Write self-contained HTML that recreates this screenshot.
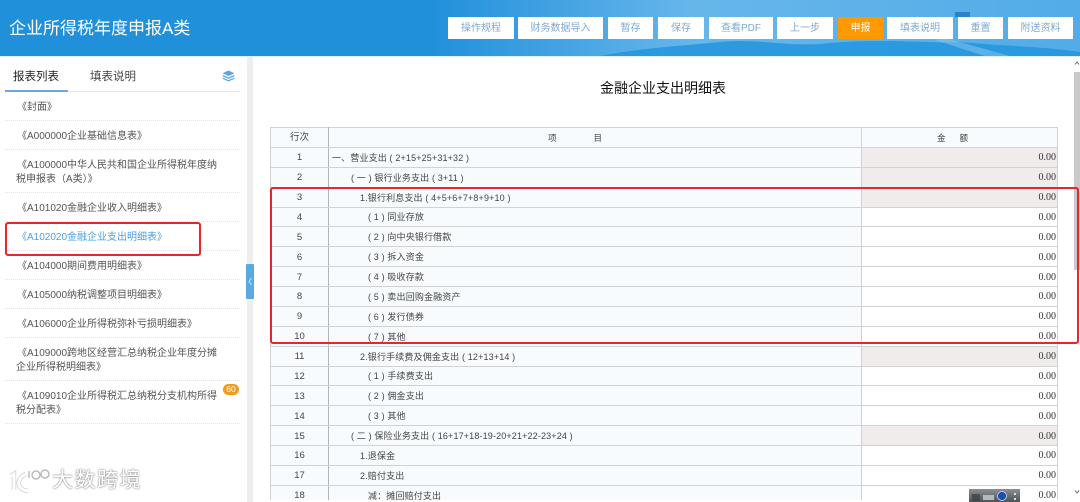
<!DOCTYPE html>
<html lang="zh"><head><meta charset="utf-8"><title>企业所得税年度申报A类</title>
<style>
*{box-sizing:border-box}
html,body{margin:0;padding:0;width:1080px;height:502px;overflow:hidden;background:#fff}
body{font-family:"Liberation Sans","Noto Sans CJK SC",sans-serif;color:#555}
#w{position:absolute;left:0;top:0;width:1080px;height:502px;overflow:hidden;filter:blur(.3px)}
.abs{position:absolute}
#hd{left:0;top:0;width:1080px;height:56px;background:linear-gradient(90deg,#2190db 0,#2190db 40%,#4aa6e4 54%,#66b6ea 64%,#5eb2e9 80%,#52ace8 100%);overflow:hidden}
#hd svg{position:absolute;left:0;top:0}
#ttl{left:9px;top:17px;font-size:17px;line-height:24px;color:#fff;white-space:nowrap}
.b{position:absolute;top:17px;height:22px;line-height:24px;background:#fff;color:#7fa9d2;font-size:10px;text-align:center;white-space:nowrap}
.b.o{background:#ff9900;color:#fff}
#ln{left:0;top:56px;width:1080px;height:1px;background:#d5effb}
#strip{left:247px;top:57px;width:6px;height:445px;background:#eeeeee}
#tog{left:246px;top:264px;width:8px;height:35px;background:#5aa9e0;border-radius:1px}
.tab{top:70px;font-size:11.500px;line-height:15px;white-space:nowrap}
#tl{left:5px;top:91px;width:235px;height:1px;background:#e6e6e6}
#tu{left:5px;top:90px;width:63px;height:2px;background:#6ea6e0}
.it{position:absolute;left:16px;width:210px;font-size:10px;line-height:14.500px;color:#555;white-space:nowrap}
.sep{position:absolute;left:5px;width:235px;height:0;border-top:1px dotted #e3e3e3}
#bad{left:223px;top:384px;width:16px;height:11px;border-radius:6px;background:#f39a1c;color:#fff;font-size:8.500px;line-height:11px;text-align:center}
#h1{left:540px;top:79px;width:246px;text-align:center;font-size:14px;line-height:18px;color:#111}
table{position:absolute;left:270px;top:127px;width:787px;border-collapse:collapse;table-layout:fixed}
td{height:19.880px;padding:1px 0 0;border:1px solid #d2d2d2;font-size:9px;line-height:12px;color:#444;white-space:nowrap;overflow:hidden}
td.n{text-align:center;background:#f7fbfd;font-size:9.500px;border-right:1px solid #aeb4b8;padding-top:2px}
td.t{background:#f7fbfd;padding-left:3px;letter-spacing:.15px}
td.v{text-align:right;padding-right:1px;padding-top:2px;font-family:"Liberation Serif",serif;font-size:10px;background:#fff;color:#333}
td.p{background:#f0ecec}
td.h{text-align:left;background:#f7fbfd;font-size:8.500px;padding-top:2px}
#cut{left:262px;top:500px;width:800px;height:2px;background:#fff}
#sb{left:1074px;top:72px;width:6px;height:198px;background:#c9c9c9}
.red{position:absolute;border:2px solid #e5262a;border-radius:3px}
#wm{left:52px;top:467px;font-size:21px;line-height:28px;color:#fff;letter-spacing:1.500px;text-shadow:0 0 2px #888,0 0 1px #777;white-space:nowrap}
#tool{left:969px;top:489px;width:51px;height:13px;background:linear-gradient(#8a8f96,#4e5358)}
</style></head><body><div id="w">
<div id="hd" class="abs">
<svg width="1080" height="56" viewBox="0 0 1080 56"><path d="M600 56C640 48 680 46 720 42C760 38 790 48 830 43C880 38 930 44 960 42C1000 46 1040 46 1080 52V56Z" fill="#1f93dc" opacity=".8"/><path d="M945 38L1010 56 985 56 935 40Z" fill="#8cc9ec" opacity=".5"/><rect x="955" y="12" width="15" height="5" fill="#2b82c6"/></svg>
<div id="ttl" class="abs">企业所得税年度申报A类</div>
<div class="b" style="left:448px;width:66px">操作规程</div>
<div class="b" style="left:518px;width:85px">财务数据导入</div>
<div class="b" style="left:608px;width:45px">暂存</div>
<div class="b" style="left:658px;width:46px">保存</div>
<div class="b" style="left:709px;width:64px">查看PDF</div>
<div class="b" style="left:777px;width:56px">上一步</div>
<div class="b o" style="left:838px;width:45px">申报</div>
<div class="b" style="left:887px;width:66px">填表说明</div>
<div class="b" style="left:958px;width:45px">重置</div>
<div class="b" style="left:1008px;width:65px">附送资料</div>
</div>
<div id="ln" class="abs"></div>
<div id="strip" class="abs"></div>
<div id="tog" class="abs"><svg width="8" height="35"><path d="M5.500 14L3 17.500 5.500 21" fill="none" stroke="#cfe6f7" stroke-width="1"/></svg></div>
<div class="abs tab" style="left:13px;color:#222">报表列表</div>
<div class="abs tab" style="left:90px;color:#444">填表说明</div>
<svg class="abs" style="left:222px;top:70px" width="13" height="12" viewBox="0 0 13 12"><path d="M6.500 0.500L12.500 3.200 6.500 6 .5 3.200Z" fill="#5aa7e6"/><path d="M.8 5.600L6.500 8.200 12.200 5.600M.8 8.200L6.500 10.800 12.200 8.200" fill="none" stroke="#5aa7e6" stroke-width="1.300"/></svg>
<div id="tl" class="abs"></div><div id="tu" class="abs"></div>
<div class="it" style="top:101px;left:17px">《封面》</div><div class="sep" style="top:120px"></div>
<div class="it" style="top:130px;left:17px">《A000000企业基础信息表》</div><div class="sep" style="top:149px"></div>
<div class="it" style="top:159px;left:17px">《A100000中华人民共和国企业所得税年度纳</div>
<div class="it" style="top:173px">税申报表（A类）》</div><div class="sep" style="top:192px"></div>
<div class="it" style="top:202px;left:17px">《A101020金融企业收入明细表》</div><div class="sep" style="top:221px"></div>
<div class="it" style="top:231px;left:17px;color:#4a9fe0">《A102020金融企业支出明细表》</div><div class="sep" style="top:250px"></div>
<div class="it" style="top:260px;left:17px">《A104000期间费用明细表》</div><div class="sep" style="top:279px"></div>
<div class="it" style="top:289px;left:17px">《A105000纳税调整项目明细表》</div><div class="sep" style="top:308px"></div>
<div class="it" style="top:318px;left:17px">《A106000企业所得税弥补亏损明细表》</div><div class="sep" style="top:337px"></div>
<div class="it" style="top:347px;left:17px">《A109000跨地区经营汇总纳税企业年度分摊</div>
<div class="it" style="top:361px">企业所得税明细表》</div><div class="sep" style="top:380px"></div>
<div class="it" style="top:390px;left:17px">《A109010企业所得税汇总纳税分支机构所得</div>
<div class="it" style="top:404px">税分配表》</div><div class="sep" style="top:423px"></div>
<div id="bad" class="abs">60</div>
<div id="h1" class="abs">金融企业支出明细表</div>
<table><colgroup><col style="width:58px"><col style="width:533px"><col style="width:196px"></colgroup>
<tr><td class="n">行次</td><td class="h" style="padding-left:219px">项<span style="margin-left:37px">目</span></td><td class="h" style="padding-left:75px">金<span style="margin-left:14px">额</span></td></tr>
<tr><td class="n">1</td><td class="t">一、营业支出 ( 2+15+25+31+32 )</td><td class="v p">0.00</td></tr>
<tr><td class="n">2</td><td class="t" style="padding-left:22px">( 一 ) 银行业务支出 ( 3+11 )</td><td class="v p">0.00</td></tr>
<tr><td class="n">3</td><td class="t" style="padding-left:31px">1.银行利息支出 ( 4+5+6+7+8+9+10 )</td><td class="v p">0.00</td></tr>
<tr><td class="n">4</td><td class="t" style="padding-left:39px">( 1 ) 同业存放</td><td class="v">0.00</td></tr>
<tr><td class="n">5</td><td class="t" style="padding-left:39px">( 2 ) 向中央银行借款</td><td class="v">0.00</td></tr>
<tr><td class="n">6</td><td class="t" style="padding-left:39px">( 3 ) 拆入资金</td><td class="v">0.00</td></tr>
<tr><td class="n">7</td><td class="t" style="padding-left:39px">( 4 ) 吸收存款</td><td class="v">0.00</td></tr>
<tr><td class="n">8</td><td class="t" style="padding-left:39px">( 5 ) 卖出回购金融资产</td><td class="v">0.00</td></tr>
<tr><td class="n">9</td><td class="t" style="padding-left:39px">( 6 ) 发行债券</td><td class="v">0.00</td></tr>
<tr><td class="n">10</td><td class="t" style="padding-left:39px">( 7 ) 其他</td><td class="v">0.00</td></tr>
<tr><td class="n">11</td><td class="t" style="padding-left:31px">2.银行手续费及佣金支出 ( 12+13+14 )</td><td class="v p">0.00</td></tr>
<tr><td class="n">12</td><td class="t" style="padding-left:39px">( 1 ) 手续费支出</td><td class="v">0.00</td></tr>
<tr><td class="n">13</td><td class="t" style="padding-left:39px">( 2 ) 佣金支出</td><td class="v">0.00</td></tr>
<tr><td class="n">14</td><td class="t" style="padding-left:39px">( 3 ) 其他</td><td class="v">0.00</td></tr>
<tr><td class="n">15</td><td class="t" style="padding-left:22px">( 二 ) 保险业务支出 ( 16+17+18-19-20+21+22-23+24 )</td><td class="v p">0.00</td></tr>
<tr><td class="n">16</td><td class="t" style="padding-left:31px">1.退保金</td><td class="v">0.00</td></tr>
<tr><td class="n">17</td><td class="t" style="padding-left:31px">2.赔付支出</td><td class="v">0.00</td></tr>
<tr><td class="n">18</td><td class="t" style="padding-left:39px">减：摊回赔付支出</td><td class="v">0.00</td></tr>
</table>
<div id="cut" class="abs"></div>
<div id="sb" class="abs"></div>
<svg class="abs" style="left:1074px;top:60px" width="6" height="6"><path d="M1 4.500L3 2 5 4.500" fill="none" stroke="#666" stroke-width="1"/></svg>
<svg class="abs" style="left:1074px;top:489px" width="6" height="6"><path d="M1 1.500L3 4 5 1.500" fill="none" stroke="#666" stroke-width="1"/></svg>
<div class="red" style="left:270px;top:187px;width:809px;height:157px"></div>
<div class="red" style="left:5px;top:222px;width:196px;height:34px"></div>
<svg class="abs" style="left:8px;top:466px" width="44" height="30" viewBox="0 0 44 30" fill="none"><g stroke="#b5b5b5" stroke-width="4.500" opacity=".6"><path d="M3 10L6 8V24"/><path d="M18 8C8 12 8 24 20 25"/></g><g stroke="#fff" stroke-width="2.800"><path d="M3 10L6 8V24"/><path d="M18 8C8 12 8 24 20 25"/></g><g stroke="#bbb" stroke-width="1.500"><path d="M21 5V12"/><circle cx="28" cy="9" r="4"/><circle cx="37" cy="8" r="4"/></g></svg>
<div id="wm" class="abs">大数跨境</div>
<div id="tool" class="abs"><svg width="51" height="13"><rect x="3" y="5" width="8" height="7" fill="#3a3e42" opacity=".7"/><rect x="14" y="6" width="11" height="5" fill="#b5babf"/><circle cx="33" cy="7" r="4.500" fill="#1d4fb0" stroke="#dfe6f2" stroke-width=".7"/><rect x="45" y="4" width="2" height="2" fill="#ddd"/><rect x="45" y="9" width="2" height="2" fill="#ddd"/></svg></div>
</div></body></html>
